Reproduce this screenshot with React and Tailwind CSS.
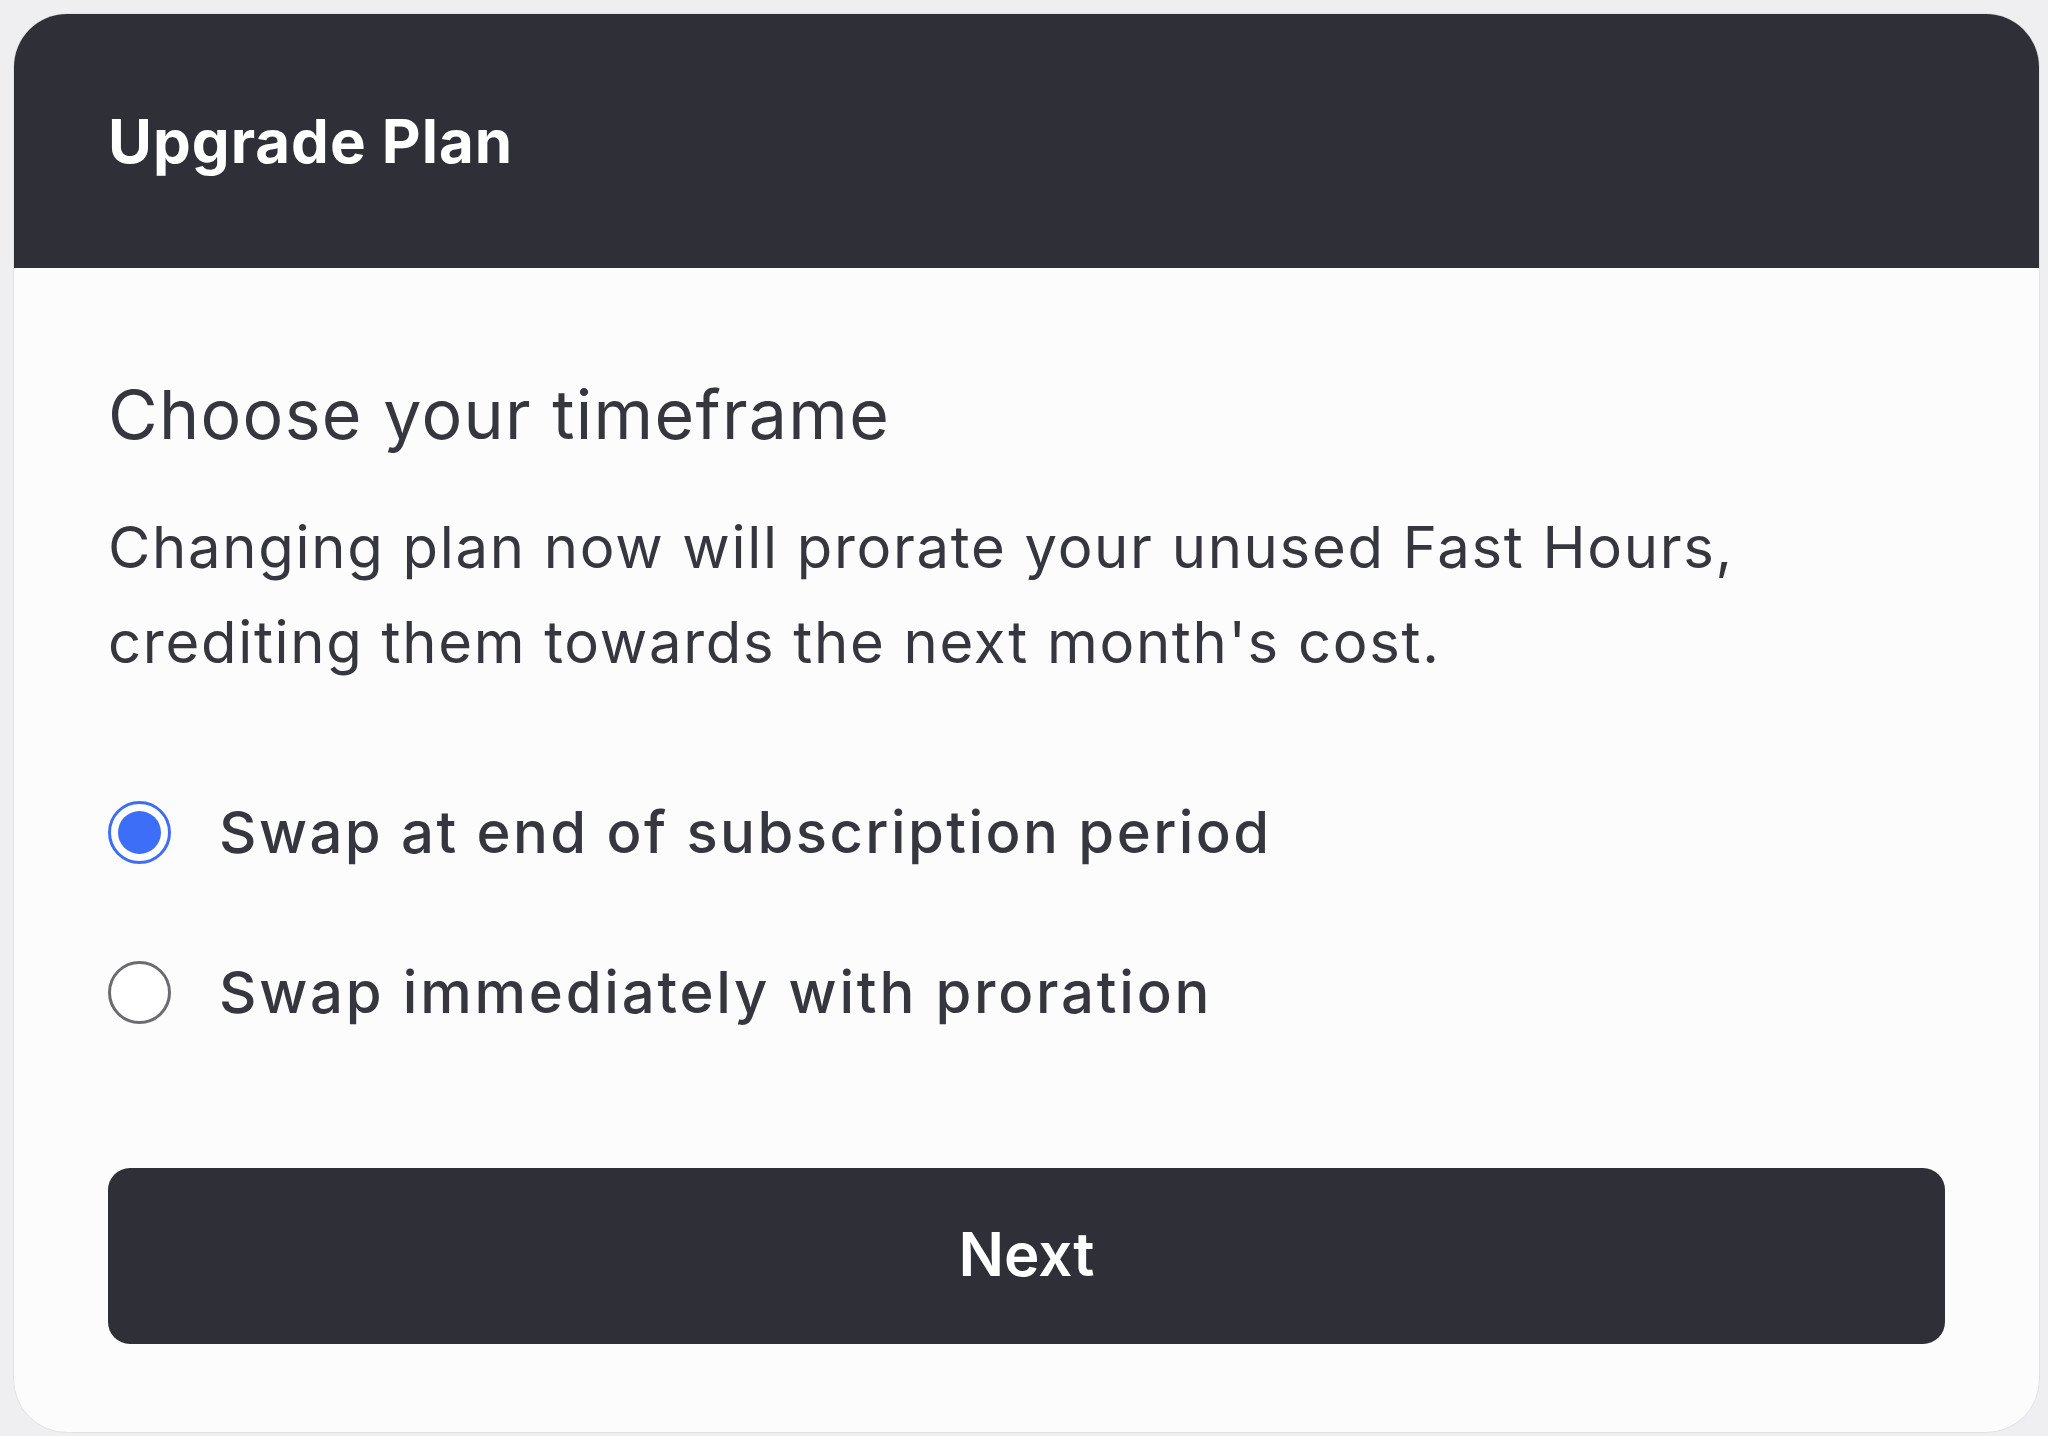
import React from "react";

export default function App() {
  const font = { fontFamily: "Inter, 'Noto Sans', sans-serif" };
  return (
    <div
      className="w-full h-[1436px] bg-[#efeff1] pt-[13px] pl-[13px] pr-[8px] overflow-hidden"
      style={font}
    >
      <div className="h-[1420px] rounded-[54px] bg-[#fcfcfc] overflow-hidden border border-[#e2e2e6] flex flex-col">
        <div className="h-[254px] shrink-0 bg-[#2f2f38] flex items-center px-[94px]">
          <h1 className="text-white text-[60px] font-bold tracking-[1px]">Upgrade Plan</h1>
        </div>
        <div className="px-[94px] pt-[106px] flex flex-col">
          <h2 className="text-[68px] leading-[80px] text-[#36363e] font-normal tracking-[1.3px]">
            Choose your timeframe
          </h2>
          <p className="mt-[46px] text-[58px] leading-[95px] text-[#36363e] tracking-[1.7px]">
            Changing plan now will prorate your unused Fast Hours,
            <br />
            crediting them towards the next month's cost.
          </p>
          <div className="mt-[110px] flex flex-col gap-[96px]">
            <label className="flex items-center gap-[48px] h-[64px]">
              <span className="w-[63px] h-[63px] rounded-full border-[3px] border-[#3d6ef7] bg-white flex items-center justify-center shrink-0">
                <span className="w-[43px] h-[43px] rounded-full bg-[#3d6ef7]" />
              </span>
              <span className="text-[58px] font-medium tracking-[2.45px] text-[#36363e]">Swap at end of subscription period</span>
            </label>
            <label className="flex items-center gap-[48px] h-[64px]">
              <span className="w-[63px] h-[63px] rounded-full border-[3px] border-[#6b6b70] bg-white shrink-0" />
              <span className="text-[58px] font-medium tracking-[2.8px] text-[#36363e]">Swap immediately with proration</span>
            </label>
          </div>
          <button className="mt-[144px] h-[176px] w-full rounded-[22px] bg-[#2f2f38] text-white text-[60px] font-semibold pb-[4px]">
            Next
          </button>
        </div>
      </div>
    </div>
  );
}
